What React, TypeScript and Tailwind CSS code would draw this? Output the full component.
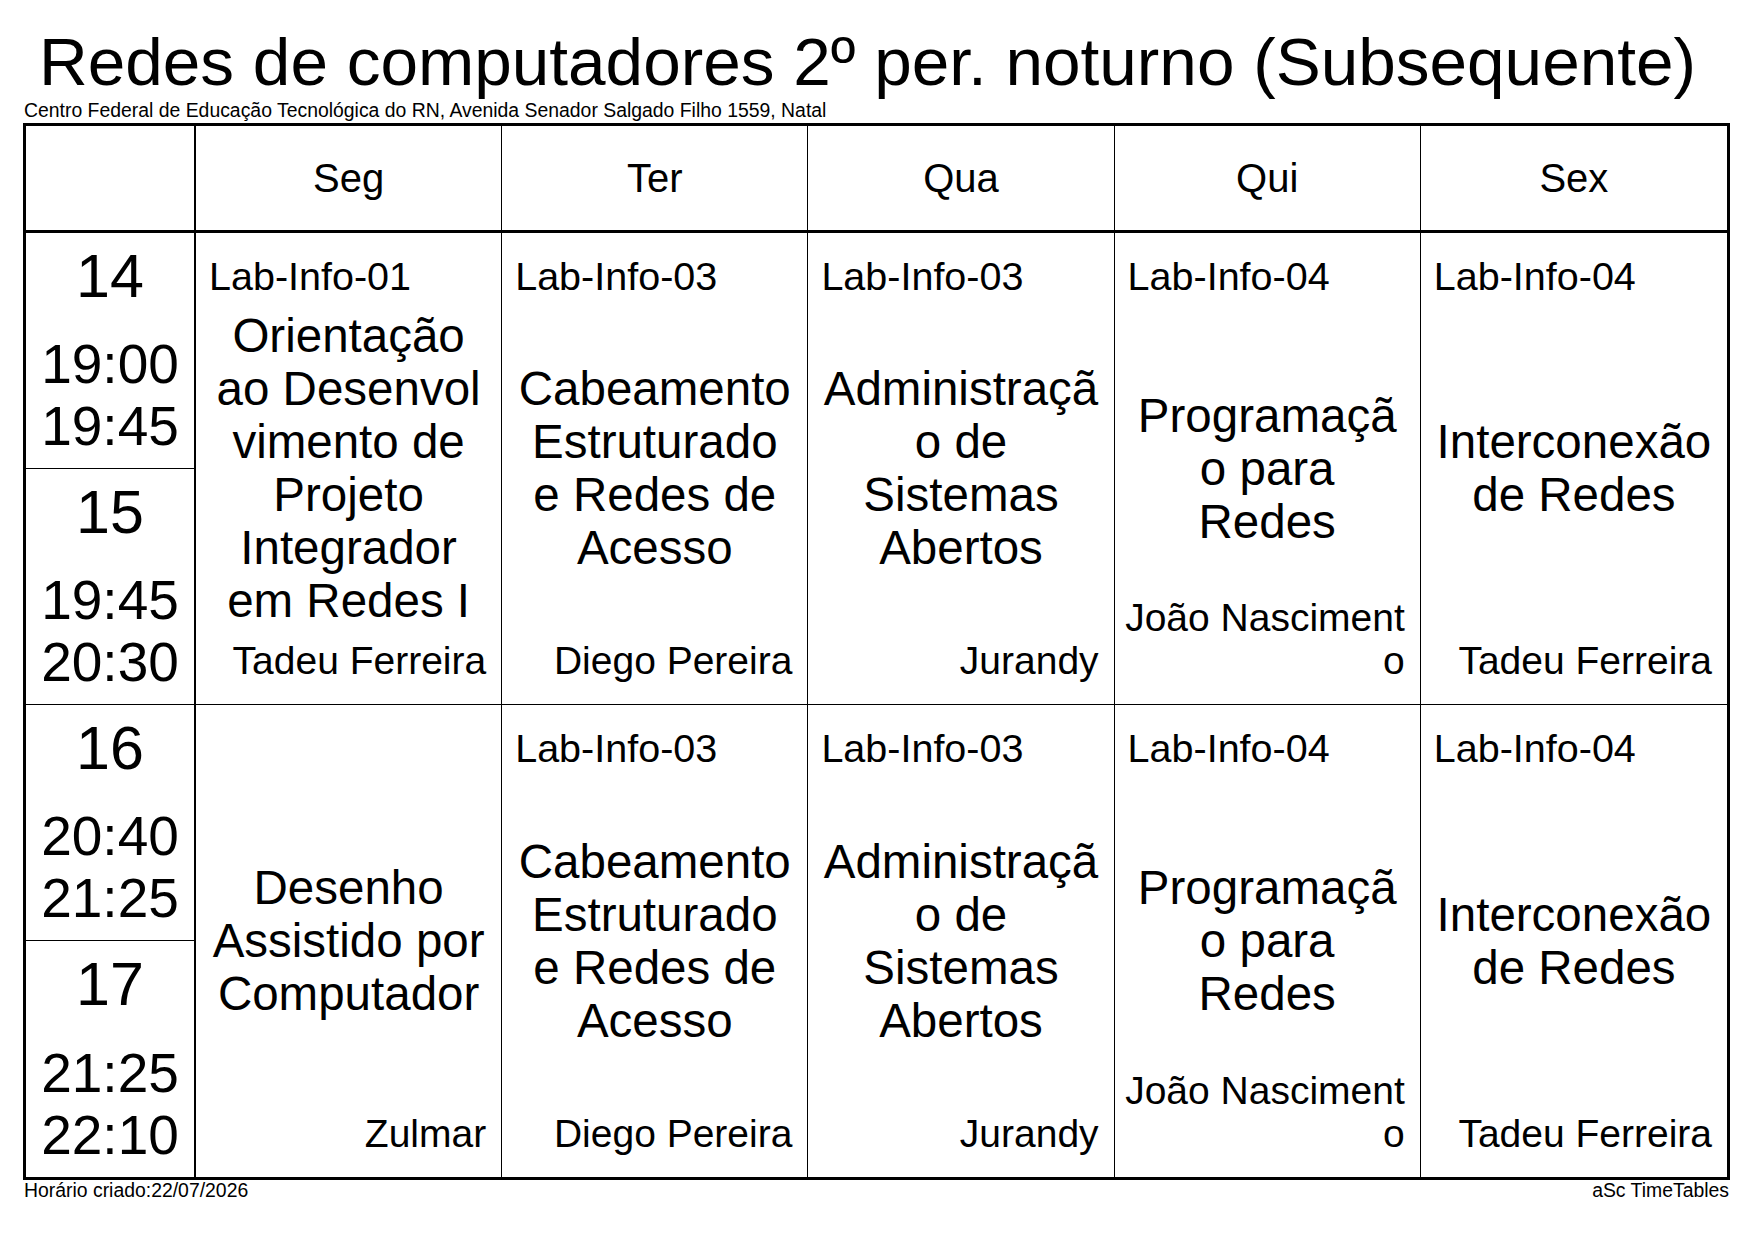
import React from "react";

type Lesson = {
  room?: string;
  subject: string[];
  teacher: string[];
};

type Block = {
  slots: { num: string; from: string; to: string }[];
  lessons: Lesson[];
};

const days = ["Seg", "Ter", "Qua", "Qui", "Sex"];

// shared lessons for Ter..Sex (same in both blocks)
const ter: Lesson = { room: "Lab-Info-03", subject: ["Cabeamento", "Estruturado", "e Redes de", "Acesso"], teacher: ["Diego Pereira"] };
const qua: Lesson = { room: "Lab-Info-03", subject: ["Administraçã", "o de", "Sistemas", "Abertos"], teacher: ["Jurandy"] };
const qui: Lesson = { room: "Lab-Info-04", subject: ["Programaçã", "o para", "Redes"], teacher: ["João Nasciment", "o"] };
const sex: Lesson = { room: "Lab-Info-04", subject: ["Interconexão", "de Redes"], teacher: ["Tadeu Ferreira"] };

const blocks: Block[] = [
  {
    slots: [
      { num: "14", from: "19:00", to: "19:45" },
      { num: "15", from: "19:45", to: "20:30" },
    ],
    lessons: [
      {
        room: "Lab-Info-01",
        subject: ["Orientação", "ao Desenvol", "vimento de", "Projeto", "Integrador", "em Redes I"],
        teacher: ["Tadeu Ferreira"],
      },
      ter,
      qua,
      qui,
      sex,
    ],
  },
  {
    slots: [
      { num: "16", from: "20:40", to: "21:25" },
      { num: "17", from: "21:25", to: "22:10" },
    ],
    lessons: [
      { subject: ["Desenho", "Assistido por", "Computador"], teacher: ["Zulmar"] },
      ter,
      qua,
      qui,
      sex,
    ],
  },
];

function TimeSlot({ num, from, to, last }: { num: string; from: string; to: string; last: boolean }) {
  return (
    <div
      className={`flex-1 flex flex-col items-center justify-between pt-[13px] pb-[11px] ${
        last ? "" : "border-b border-black"
      }`}
    >
      <span className="text-[61px] leading-none">{num}</span>
      <div className="flex flex-col items-center text-[55px] leading-[62px]">
        <span>{from}</span>
        <span>{to}</span>
      </div>
    </div>
  );
}

function LessonCell({ lesson, lastCol, lastRow }: { lesson: Lesson; lastCol: boolean; lastRow: boolean }) {
  return (
    <div
      className={`grid min-w-0 overflow-hidden ${lastCol ? "" : "border-r border-black"} ${
        lastRow ? "" : "border-b border-black"
      }`}
    >
      {lesson.room && (
        <div className="col-start-1 row-start-1 self-start justify-self-start pl-[13px] pt-[24px] text-[39.5px] leading-none whitespace-nowrap">
          {lesson.room}
        </div>
      )}
      <div className="col-start-1 row-start-1 self-center justify-self-center flex flex-col items-center text-center text-[47.5px] leading-[53px] whitespace-nowrap">
        {lesson.subject.map((line, i) => (
          <span key={i}>{line}</span>
        ))}
      </div>
      <div className="col-start-1 row-start-1 self-end justify-self-end flex flex-col items-end pr-[15px] pb-[22px] text-[39px] leading-[43px] whitespace-nowrap">
        {lesson.teacher.map((line, i) => (
          <span key={i}>{line}</span>
        ))}
      </div>
    </div>
  );
}

export default function App() {
  return (
    <div className="w-[1755px] h-[1241px] bg-white text-black font-['Liberation_Sans',Arial,sans-serif]">
      <div className="ml-[23px] w-[1707px] pt-[28px]">
        <h1 className="pr-[18px] text-center text-[67.5px] leading-none whitespace-nowrap">
          Redes de computadores 2º per. noturno (Subsequente)
        </h1>
        <div className="mt-[5px] pl-[1px] text-[19.4px] leading-none whitespace-nowrap">
          Centro Federal de Educação Tecnológica do RN, Avenida Senador Salgado Filho 1559, Natal
        </div>

        {/* timetable grid */}
        <div className="mt-[3px] border-[3px] border-black grid grid-cols-[170px_repeat(5,minmax(0,1fr))] grid-rows-[107px_472px_472px]">
          <div className="border-r-2 border-b-[3px] border-black" />
          {days.map((d, i) => (
            <div
              key={d}
              className={`flex items-center justify-center border-b-[3px] border-black text-[40px] leading-none ${
                i < days.length - 1 ? "border-r" : ""
              }`}
            >
              {d}
            </div>
          ))}

          {blocks.map((block, bi) => {
            const lastRow = bi === blocks.length - 1;
            return (
              <React.Fragment key={bi}>
                <div className={`flex flex-col border-r-2 border-black ${lastRow ? "" : "border-b"}`}>
                  {block.slots.map((s, si) => (
                    <TimeSlot key={s.num} {...s} last={si === block.slots.length - 1} />
                  ))}
                </div>
                {block.lessons.map((lesson, li) => (
                  <LessonCell
                    key={li}
                    lesson={lesson}
                    lastCol={li === block.lessons.length - 1}
                    lastRow={lastRow}
                  />
                ))}
              </React.Fragment>
            );
          })}
        </div>

        <div className="mt-[1px] flex justify-between px-[1px] text-[19.4px] leading-none">
          <span>Horário criado:22/07/2026</span>
          <span>aSc TimeTables</span>
        </div>
      </div>
    </div>
  );
}
